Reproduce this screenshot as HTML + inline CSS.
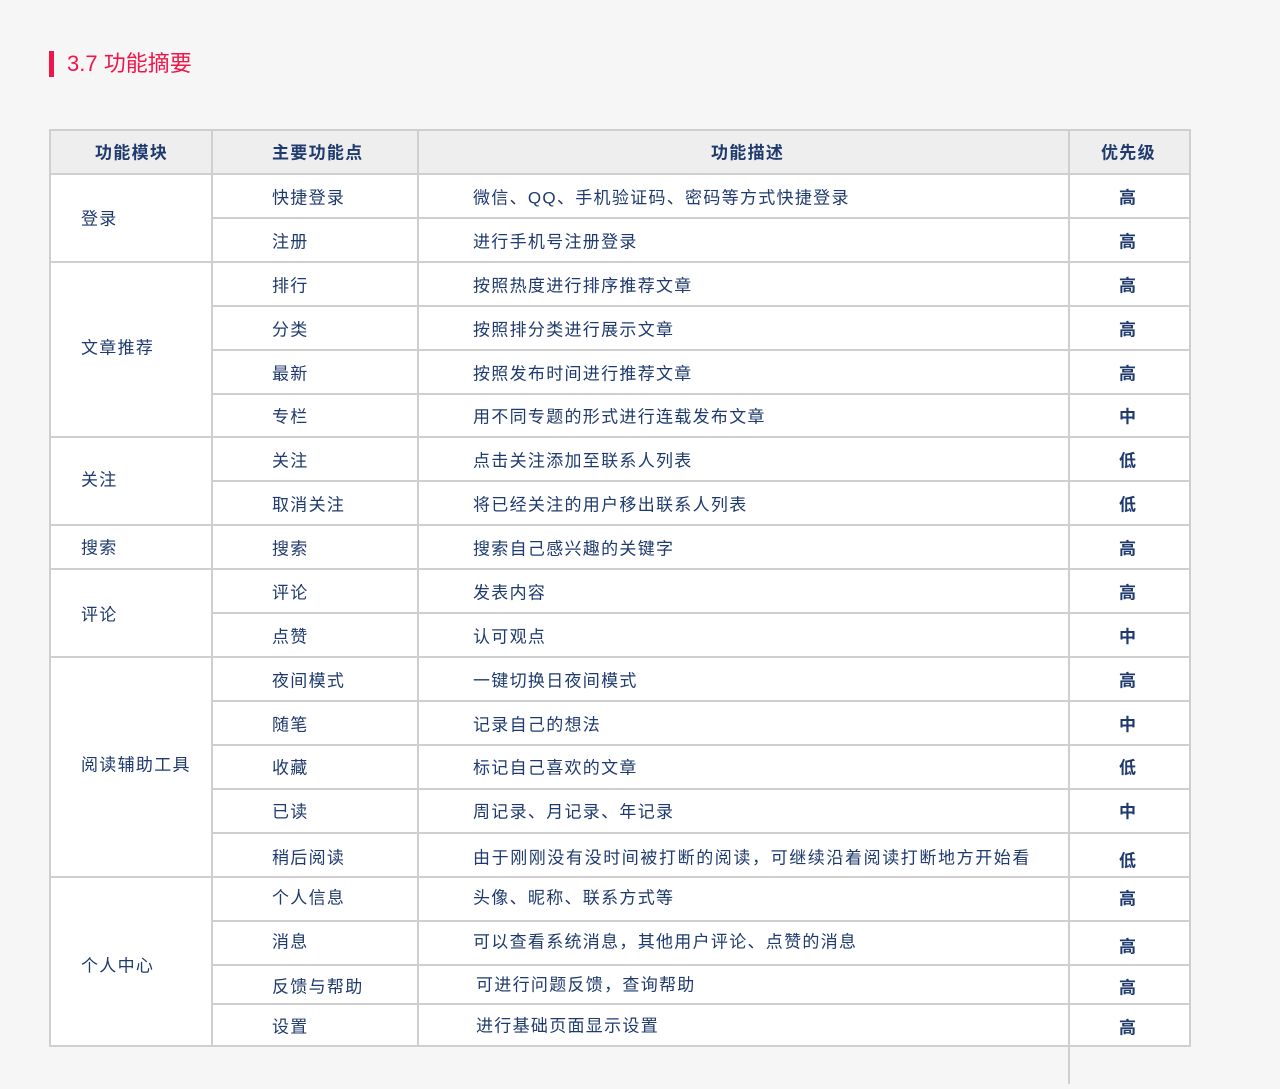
<!DOCTYPE html>
<html><head><meta charset="utf-8"><style>
body{margin:0;background:#f6f6f6;width:1280px;height:1089px;position:relative;overflow:hidden;font-family:"Liberation Sans","Noto Sans CJK SC",sans-serif;}
.t{position:absolute;font-size:17px;letter-spacing:1.3px;color:#1f3a6e;white-space:nowrap;line-height:20px;transform:translateY(1.5px);}
.b{font-weight:bold;}
.hl{position:absolute;height:2px;background:#cfcfcf;}
.vl{position:absolute;width:2px;background:#cfcfcf;}
</style></head><body>
<div style="position:absolute;left:49px;top:51px;width:5px;height:26px;background:#f0164a"></div>
<div style="position:absolute;left:67px;top:52px;font-size:22px;color:#f0164a;line-height:24px;">3.7 功能摘要</div>

<div style="position:absolute;left:49px;top:129px;width:1141px;height:917px;background:#fff;"></div>
<div style="position:absolute;left:49px;top:129px;width:1141px;height:45px;background:#eeeeee;"></div>

<div class="vl" style="left:49px;top:129px;height:918px"></div>
<div class="vl" style="left:211px;top:129px;height:918px"></div>
<div class="vl" style="left:417px;top:129px;height:918px"></div>
<div class="vl" style="left:1068px;top:129px;height:955px"></div>
<div class="vl" style="left:1189px;top:129px;height:918px"></div>
<div class="hl" style="left:49px;top:129px;width:1142px"></div>
<div class="hl" style="left:49px;top:173px;width:1142px"></div>
<div class="hl" style="left:211px;top:217px;width:980px"></div>
<div class="hl" style="left:49px;top:261px;width:1142px"></div>
<div class="hl" style="left:211px;top:305px;width:980px"></div>
<div class="hl" style="left:211px;top:349px;width:980px"></div>
<div class="hl" style="left:211px;top:393px;width:980px"></div>
<div class="hl" style="left:49px;top:436px;width:1142px"></div>
<div class="hl" style="left:211px;top:480px;width:980px"></div>
<div class="hl" style="left:49px;top:524px;width:1142px"></div>
<div class="hl" style="left:49px;top:568px;width:1142px"></div>
<div class="hl" style="left:211px;top:612px;width:980px"></div>
<div class="hl" style="left:49px;top:656px;width:1142px"></div>
<div class="hl" style="left:211px;top:700px;width:980px"></div>
<div class="hl" style="left:211px;top:744px;width:980px"></div>
<div class="hl" style="left:211px;top:788px;width:980px"></div>
<div class="hl" style="left:211px;top:832px;width:980px"></div>
<div class="hl" style="left:49px;top:876px;width:1142px"></div>
<div class="hl" style="left:211px;top:920px;width:980px"></div>
<div class="hl" style="left:211px;top:964px;width:980px"></div>
<div class="hl" style="left:211px;top:1003px;width:980px"></div>
<div class="hl" style="left:49px;top:1045px;width:1142px"></div>

<div class="t b" style="left:95px;top:142px">功能模块</div>
<div class="t b" style="left:272px;top:142px">主要功能点</div>
<div class="t b" style="left:711px;top:142px">功能描述</div>
<div class="t b" style="left:1101px;top:142px">优先级</div>

<div class="t" style="left:81px;top:208px">登录</div>
<div class="t" style="left:81px;top:337px">文章推荐</div>
<div class="t" style="left:81px;top:469px">关注</div>
<div class="t" style="left:81px;top:537px">搜索</div>
<div class="t" style="left:81px;top:604px">评论</div>
<div class="t" style="left:81px;top:754px">阅读辅助工具</div>
<div class="t" style="left:81px;top:955px">个人中心</div>

<div class="t" style="left:272px;top:187px">快捷登录</div><div class="t" style="left:473px;top:187px">微信、QQ、手机验证码、密码等方式快捷登录</div><div class="t b" style="left:1119px;top:187px">高</div>
<div class="t" style="left:272px;top:231px">注册</div><div class="t" style="left:473px;top:231px">进行手机号注册登录</div><div class="t b" style="left:1119px;top:231px">高</div>
<div class="t" style="left:272px;top:275px">排行</div><div class="t" style="left:473px;top:275px">按照热度进行排序推荐文章</div><div class="t b" style="left:1119px;top:275px">高</div>
<div class="t" style="left:272px;top:319px">分类</div><div class="t" style="left:473px;top:319px">按照排分类进行展示文章</div><div class="t b" style="left:1119px;top:319px">高</div>
<div class="t" style="left:272px;top:363px">最新</div><div class="t" style="left:473px;top:363px">按照发布时间进行推荐文章</div><div class="t b" style="left:1119px;top:363px">高</div>
<div class="t" style="left:272px;top:406px">专栏</div><div class="t" style="left:473px;top:406px">用不同专题的形式进行连载发布文章</div><div class="t b" style="left:1119px;top:406px">中</div>
<div class="t" style="left:272px;top:450px">关注</div><div class="t" style="left:473px;top:450px">点击关注添加至联系人列表</div><div class="t b" style="left:1119px;top:450px">低</div>
<div class="t" style="left:272px;top:494px">取消关注</div><div class="t" style="left:473px;top:494px">将已经关注的用户移出联系人列表</div><div class="t b" style="left:1119px;top:494px">低</div>
<div class="t" style="left:272px;top:538px">搜索</div><div class="t" style="left:473px;top:538px">搜索自己感兴趣的关键字</div><div class="t b" style="left:1119px;top:538px">高</div>
<div class="t" style="left:272px;top:582px">评论</div><div class="t" style="left:473px;top:582px">发表内容</div><div class="t b" style="left:1119px;top:582px">高</div>
<div class="t" style="left:272px;top:626px">点赞</div><div class="t" style="left:473px;top:626px">认可观点</div><div class="t b" style="left:1119px;top:626px">中</div>
<div class="t" style="left:272px;top:670px">夜间模式</div><div class="t" style="left:473px;top:670px">一键切换日夜间模式</div><div class="t b" style="left:1119px;top:670px">高</div>
<div class="t" style="left:272px;top:714px">随笔</div><div class="t" style="left:473px;top:714px">记录自己的想法</div><div class="t b" style="left:1119px;top:714px">中</div>
<div class="t" style="left:272px;top:757px">收藏</div><div class="t" style="left:473px;top:757px">标记自己喜欢的文章</div><div class="t b" style="left:1119px;top:757px">低</div>
<div class="t" style="left:272px;top:801px">已读</div><div class="t" style="left:473px;top:801px">周记录、月记录、年记录</div><div class="t b" style="left:1119px;top:801px">中</div>
<div class="t" style="left:272px;top:847px">稍后阅读</div><div class="t" style="left:473px;top:847px;letter-spacing:1.6px">由于刚刚没有没时间被打断的阅读，可继续沿着阅读打断地方开始看</div><div class="t b" style="left:1119px;top:850px">低</div>
<div class="t" style="left:272px;top:887px">个人信息</div><div class="t" style="left:473px;top:887px">头像、昵称、联系方式等</div><div class="t b" style="left:1119px;top:888px">高</div>
<div class="t" style="left:272px;top:931px">消息</div><div class="t" style="left:473px;top:931px">可以查看系统消息，其他用户评论、点赞的消息</div><div class="t b" style="left:1119px;top:936px">高</div>
<div class="t" style="left:272px;top:976px">反馈与帮助</div><div class="t" style="left:476px;top:974px">可进行问题反馈，查询帮助</div><div class="t b" style="left:1119px;top:977px">高</div>
<div class="t" style="left:272px;top:1016px">设置</div><div class="t" style="left:476px;top:1015px">进行基础页面显示设置</div><div class="t b" style="left:1119px;top:1017px">高</div>
</body></html>
